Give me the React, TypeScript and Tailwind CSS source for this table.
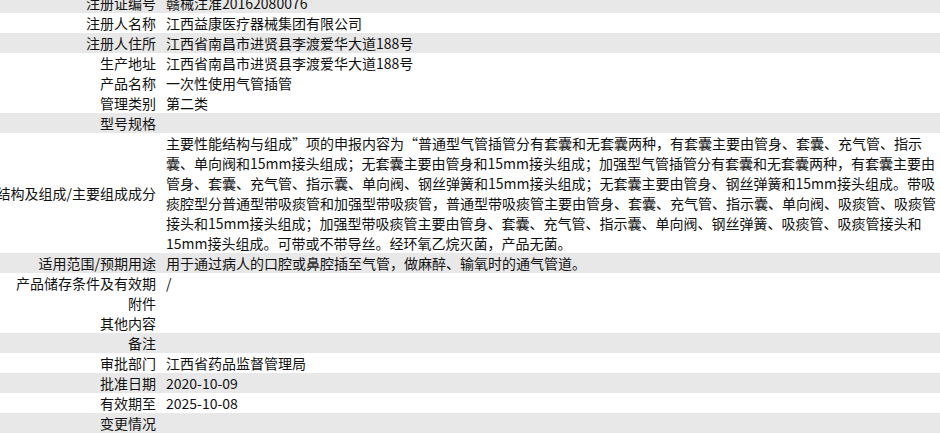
import React from "react";

type Row = { label: string; value?: React.ReactNode; grey?: boolean };

const para = [
  "主要性能结构与组成”项的申报内容为“普通型气管插管分有套囊和无套囊两种，有套囊主要由管身、套囊、充气管、指示",
  "囊、单向阀和15mm接头组成；无套囊主要由管身和15mm接头组成；加强型气管插管分有套囊和无套囊两种，有套囊主要由",
  "管身、套囊、充气管、指示囊、单向阀、钢丝弹簧和15mm接头组成；无套囊主要由管身、钢丝弹簧和15mm接头组成。带吸",
  "痰腔型分普通型带吸痰管和加强型带吸痰管，普通型带吸痰管主要由管身、套囊、充气管、指示囊、单向阀、吸痰管、吸痰管",
  "接头和15mm接头组成；加强型带吸痰管主要由管身、套囊、充气管、指示囊、单向阀、钢丝弹簧、吸痰管、吸痰管接头和",
  "15mm接头组成。可带或不带导丝。经环氧乙烷灭菌，产品无菌。",
];

const rows: Row[] = [
  { label: "注册证编号", value: "赣械注准20162080076", grey: true },
  { label: "注册人名称", value: "江西益康医疗器械集团有限公司" },
  { label: "注册人住所", value: "江西省南昌市进贤县李渡爱华大道188号", grey: true },
  { label: "生产地址", value: "江西省南昌市进贤县李渡爱华大道188号" },
  { label: "产品名称", value: "一次性使用气管插管" },
  { label: "管理类别", value: "第二类" },
  { label: "型号规格", grey: true },
  {
    label: "结构及组成/主要组成成分",
    value: (
      <div className="flex flex-col">
        {para.map((l, i) => (
          <span key={i} className="whitespace-nowrap">
            {l}
          </span>
        ))}
      </div>
    ),
  },
  { label: "适用范围/预期用途", value: "用于通过病人的口腔或鼻腔插至气管，做麻醉、输氧时的通气管道。", grey: true },
  { label: "产品储存条件及有效期", value: "/" },
  { label: "附件" },
  { label: "其他内容" },
  { label: "备注", grey: true },
  { label: "审批部门", value: "江西省药品监督管理局" },
  { label: "批准日期", value: "2020-10-09", grey: true },
  { label: "有效期至", value: "2025-10-08" },
  { label: "变更情况", grey: true },
];

export default function App() {
  return (
    <div
      className="w-[940px] h-[434px] overflow-hidden bg-white text-[14px] leading-[20px] text-[#111]"
      style={{ fontFamily: '"Noto Sans CJK SC", "Noto Sans", sans-serif' }}
    >
      <div className="-mt-[7px] flex flex-col">
        {rows.map((r, i) => (
          <div key={i} className={`flex ${r.grey ? "bg-[#e8e8e8]" : "bg-white"}`}>
            <div className="w-[160px] shrink-0 flex items-center justify-end pr-[4px]">
              <span className="whitespace-nowrap shrink-0">{r.label}</span>
            </div>
            <div className="flex-1 min-w-0 pl-[6px] min-h-[20px] whitespace-nowrap">{r.value}</div>
          </div>
        ))}
      </div>
    </div>
  );
}
